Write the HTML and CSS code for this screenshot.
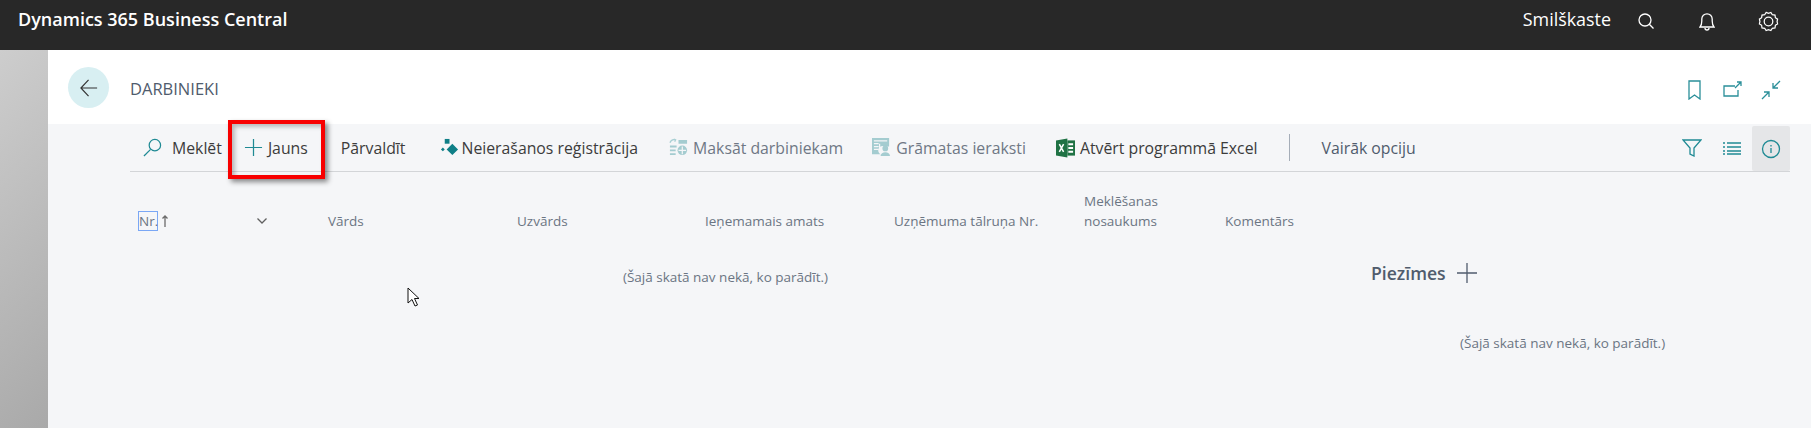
FILE: index.html
```html
<!DOCTYPE html>
<html lang="lv">

<head>
    <meta charset="UTF-8">
    <title>Darbinieki</title>
    <link rel="stylesheet" href="styles.css">
</head>

<body>
    <header class="top-bar">
        <div class="app-name">Dynamics 365 Business Central</div>
        <div class="top-actions">
            <span class="sandbox">Smilškaste</span>
            <svg class="top-icon top-search" viewBox="0 0 16 16"><circle cx="7" cy="7" r="6"/><path d="m11.300 11.300 4.200 4.200"/></svg>
            <svg class="top-icon top-bell" viewBox="0 0 16 19"><path d="M1 15h14c-1.300-1.500-1.800-3-1.800-6V7A5.200 5.200 0 0 0 2.800 7v2c0 3-.5 4.500-1.800 6Z"/><path d="M6 16a2 2 0 0 0 4 0"/></svg>
            <svg class="top-icon top-gear" viewBox="0 0 22 22"><circle cx="11" cy="11" r="4.500"/><path d="m8.500 1.500 2.500 1 2.500-1 1.500 2.400 2.800.3.400 2.800L20.500 8.500 20 11l.5 2.500-2.300 1.500-.4 2.800-2.800.3-1.500 2.400-2.500-1-2.500 1L7 18.100l-2.800-.3-.4-2.800-2.300-1.500L2 11l-.5-2.500L3.800 7l.4-2.800L7 3.900Z"/></svg>
        </div>
    </header>

    <div class="workspace">
        <div class="side-strip"></div>
        <main class="page">
            <div class="page-head">
                <div class="back-btn">
                    <svg viewBox="0 0 20 20"><path d="M19 10H1M9.500 1 1 10l8.500 9"/></svg>
                </div>
                <div class="page-title">DARBINIEKI</div>
                <div class="head-actions">
                    <svg class="head-icon head-mark" viewBox="0 0 13 20"><path d="M1 1h11v18l-5.500-4L1 19Z"/></svg>
                    <svg class="head-icon head-share" viewBox="0 0 20 20"><path d="M12 6H1v10h14v-6M12 8l6-6M14 2h4v4"/></svg>
                    <svg class="head-icon" viewBox="0 0 20 20"><path d="M19 1l-7 7M12 3v5h5M1 19l7-7M3 12h5v5"/></svg>
                </div>
            </div>

            <div class="toolbar">
                <div class="tool tool-search">
                    <svg class="tool-icon" viewBox="0 0 20 20"><circle cx="12.500" cy="7.500" r="6"/><path d="M8 12 1 19"/></svg>
                    Meklēt
                </div>
                <div class="tool tool-new">
                    <svg class="tool-icon" viewBox="0 0 20 20"><path d="M10 1v18M1 10h18"/></svg>
                    Jauns
                </div>
                <div class="tool tool-manage">Pārvaldīt</div>
                <div class="tool tool-absence">
                    <svg class="tool-icon" viewBox="0 0 20 20"><rect class="solid" x="5" y="1" width="5" height="5"/><path class="solid" d="M13 6l6 6-6 6-6-6ZM3 10l2 2-2 2-2-2Z"/></svg>
                    Neierašanos reģistrācija
                </div>
                <div class="tool tool-off tool-pay">
                    <svg class="tool-icon" viewBox="0 0 20 20"><path d="M1 5c1-3 3-4 6-3M5 1l2 1-1 2"/><path class="solid" d="M10 2h9v4h-9ZM1 8h7v2H1ZM1 12h6v2H1ZM1 16h6v2H1Z"/><circle class="solid" cx="14" cy="13" r="5"/><path class="light" d="M10 13h8M14 9v8"/></svg>
                    Maksāt darbiniekam
                </div>
                <div class="tool tool-off tool-ledger">
                    <svg class="tool-icon" viewBox="0 0 20 20"><path class="solid" d="M0 0h18v9h-5a4 4 0 0 0-4 8H0Z"/><path class="light" d="M2 3h14M2 6h5M2 9h5M2 12h5M8 6v6"/><circle class="solid" cx="14" cy="11" r="3"/><path class="solid" d="M9 19c0-5.500 10-5.500 10 0Z"/></svg>
                    Grāmatas ieraksti
                </div>
                <div class="tool tool-excel">
                    <svg class="excel-icon" viewBox="0 0 20 20"><path fill="#1f7244" d="M0 2 12 0v20L0 18Z"/><path fill="#1f7244" d="M12 2h8v16h-8Z"/><path fill="#fff" d="M13 5h5v2h-5ZM13 9h5v2h-5ZM13 13h5v2h-5Z"/><path stroke="#fff" stroke-width="1.600" fill="none" d="m3.500 6 4.500 8M8 6l-4.500 8"/></svg>
                    Atvērt programmā Excel
                </div>
                <div class="tool-sep"></div>
                <div class="tool tool-more">Vairāk opciju</div>
                <div class="tool-right">
                    <svg class="side-icon" viewBox="0 0 20 18"><path d="M1 1h18l-7 8v8l-4-2V9Z"/></svg>
                    <svg class="side-icon" viewBox="0 0 18 14"><path d="M0 2h2M4 2h14M0 6h2M4 6h14M0 10h2M4 10h14M0 13h2M4 13h14"/></svg>
                    <div class="info-btn">
                        <svg class="side-icon" viewBox="0 0 20 20"><circle cx="10" cy="10" r="8.500"/><path d="M10 9v5M10 6v1.500"/></svg>
                    </div>
                </div>
            </div>

            <div class="content">
                <div class="list-part">
                    <div class="col-heads">
                        <div class="col col-no">
                            <span class="no-focus">Nr.</span>
                            <svg class="sort-arrow" viewBox="0 0 8 12"><path d="M4 12V1M1.500 3.500 4 1l2.500 2.500"/></svg>
                            <svg class="chevron" viewBox="0 0 12 8"><path d="m1.500 1.500 4.500 4.500 4.500-4.500"/></svg>
                        </div>
                        <div class="col">Vārds</div>
                        <div class="col">Uzvārds</div>
                        <div class="col">Ieņemamais amats</div>
                        <div class="col">Uzņēmuma tālruņa Nr.</div>
                        <div class="col col-search">Meklēšanas nosaukums</div>
                        <div class="col">Komentārs</div>
                    </div>
                    <div class="empty-msg list-empty">(Šajā skatā nav nekā, ko parādīt.)</div>
                </div>
                <aside class="factbox">
                    <div class="notes-head">
                        Piezīmes
                        <svg class="notes-add" viewBox="0 0 20 20"><path d="M10 0v20M0 10h20"/></svg>
                    </div>
                    <div class="empty-msg notes-empty">(Šajā skatā nav nekā, ko parādīt.)</div>
                </aside>
            </div>
        </main>
    </div>

    <div class="highlight-box"></div>
    <svg class="mouse-cursor" viewBox="0 0 13 20"><path d="M1 1v15l4-3.500 3 6.500 2.500-1-3-6.500H12Z"/></svg>
</body>

</html>
```

FILE: styles.css
```css
* {
    box-sizing: border-box;
}

body {
    margin: 0;
    height: 428px;
    overflow: hidden;
    font-family: "Open Sans", "Noto Sans", sans-serif;
    font-size: 16px;
    color: #505c6d;
    background-color: #f5f6f8;
    position: relative;
}

svg {
    fill: none;
    stroke-width: 1.300;
    flex: none;
}

.top-bar {
    height: 50px;
    display: flex;
    align-items: flex-start;
    justify-content: space-between;
    background-color: #282828;
    color: #fff;
}

.app-name {
    margin: 6px 0 0 18px;
    font-size: 18px;
    font-weight: 600;
    line-height: 26px;
}

.top-actions {
    display: flex;
    align-items: center;
    height: 42px;
    margin-right: 32px;
}

.sandbox {
    font-size: 17.900px;
    margin-right: 27px;
    margin-top: -5px;
}

.top-icon {
    stroke: #fff;
}

.top-search {
    width: 16px;
    height: 16px;
}

.top-bell {
    width: 16px;
    height: 19px;
    margin-left: 45px;
}

.top-gear {
    width: 21px;
    height: 21px;
    margin-left: 43px;
}

.workspace {
    display: flex;
    height: 378px;
}

.side-strip {
    width: 48px;
    background: linear-gradient(135deg, #cdcdcd, #a9a9a9);
}

.page {
    flex: 1;
    display: flex;
    flex-direction: column;
}

.page-head {
    height: 74px;
    padding: 17px 30px 0 20px;
    display: flex;
    align-items: flex-start;
    background-color: #fff;
}

.back-btn {
    width: 41px;
    height: 41px;
    border-radius: 50%;
    background-color: #d8eff2;
    display: flex;
    align-items: center;
    justify-content: center;
}

.back-btn svg {
    width: 20px;
    height: 18px;
    stroke: #333;
}

.page-title {
    margin: 11px 0 0 21px;
    font-size: 16.500px;
    line-height: 22px;
    color: #505c6d;
}

.head-actions {
    margin-left: auto;
    margin-top: 13px;
    display: flex;
    gap: 20px;
}

.head-icon {
    width: 20px;
    height: 20px;
    stroke: #2a8f99;
}

.head-mark {
    width: 13px;
}

.head-share {
    margin: 0 -2px 0 2px;
}

.toolbar {
    height: 48px;
    margin: 0 21px 0 82px;
    display: flex;
    align-items: center;
    border-bottom: 1px solid #d3d5d8;
    white-space: nowrap;
}

.tool {
    display: flex;
    align-items: center;
    color: #3c3c3c;
    font-size: 15.800px;
}

.tool-icon {
    width: 19px;
    height: 19px;
    stroke: #1f8a94;
    margin-right: 5px;
}

.tool-icon .solid {
    fill: #0f7f87;
    stroke: none;
}

.tool-icon .light {
    stroke: #f5f6f8;
}

.tool-search {
    margin-left: 13px;
}

.tool-search .tool-icon {
    margin-right: 10px;
}

.tool-new {
    margin-left: 22px;
}

.tool-manage {
    margin-left: 33px;
}

.tool-absence {
    margin-left: 34px;
}

.tool-absence .tool-icon {
    margin-right: 3px;
}

.tool-pay {
    margin-left: 31px;
}

.tool-ledger {
    margin-left: 29px;
}

.tool-excel {
    margin-left: 30px;
}

.tool-off {
    color: #6f7885;
}

.tool-off .tool-icon {
    opacity: 0.35;
}

.excel-icon {
    width: 19px;
    height: 20px;
    margin-right: 5px;
}

.tool-sep {
    width: 1px;
    height: 27px;
    background-color: #a5adb8;
    margin-left: 31px;
}

.tool-more {
    margin-left: 32px;
    color: #505c6d;
}

.tool-right {
    margin-left: auto;
    display: flex;
    align-items: center;
    height: 100%;
}

.side-icon {
    width: 20px;
    height: 18px;
    stroke: #1f8a94;
    margin-right: 21px;
}

.side-icon + .side-icon {
    width: 18px;
    height: 14px;
    margin-right: 11px;
}

.info-btn {
    width: 38px;
    height: 45px;
    margin-top: 2px;
    border-radius: 2px;
    background-color: #e5e6e8;
    display: flex;
    align-items: center;
    justify-content: center;
}

.info-btn .side-icon {
    margin: 0;
    height: 20px;
}

.content {
    flex: 1;
    display: flex;
}

.list-part {
    width: 1323px;
    padding-left: 90px;
}

.col-heads {
    display: grid;
    grid-template-columns: 190px 189px 188px 189px 190px 141px 120px;
    align-items: end;
    height: 59px;
    font-size: 13.500px;
    line-height: 19.500px;
    color: #6b7583;
}

.col-no {
    display: flex;
    align-items: center;
    height: 20px;
}

.no-focus {
    border: 1px solid #7aa7f5;
    margin-right: 3px;
    height: 20px;
    width: 20px;
    line-height: 18px;
    white-space: nowrap;
}

.sort-arrow {
    width: 8px;
    height: 12px;
    stroke: #6b6b6b;
}

.chevron {
    width: 12px;
    height: 8px;
    stroke: #606060;
    margin-left: 87px;
}

.col-search {
    padding-right: 30px;
}

.empty-msg {
    font-size: 13.500px;
    color: #6b7583;
    line-height: 20px;
    text-align: center;
}

.list-empty {
    margin-top: 36px;
    padding-right: 58px;
}

.factbox {
    flex: 1;
    padding-top: 89px;
}

.notes-head {
    display: flex;
    align-items: center;
    font-size: 17.600px;
    font-weight: 600;
    line-height: 24px;
    color: #505c6d;
}

.notes-add {
    width: 20px;
    height: 20px;
    stroke: #505c6d;
    margin-left: 11px;
}

.notes-empty {
    margin-top: 48px;
    padding-left: 89px;
    text-align: left;
}

.highlight-box {
    position: absolute;
    left: 228px;
    top: 120px;
    width: 97px;
    height: 59px;
    border: 4px solid #f80000;
    box-shadow: 3px 3px 5px rgba(0, 0, 0, 0.45), inset 3px 3px 4px rgba(0, 0, 0, 0.25);
}

.mouse-cursor {
    position: absolute;
    left: 407px;
    top: 287px;
    width: 13px;
    height: 20px;
    fill: #fff;
    stroke: #111;
    stroke-width: 1;
}
```
